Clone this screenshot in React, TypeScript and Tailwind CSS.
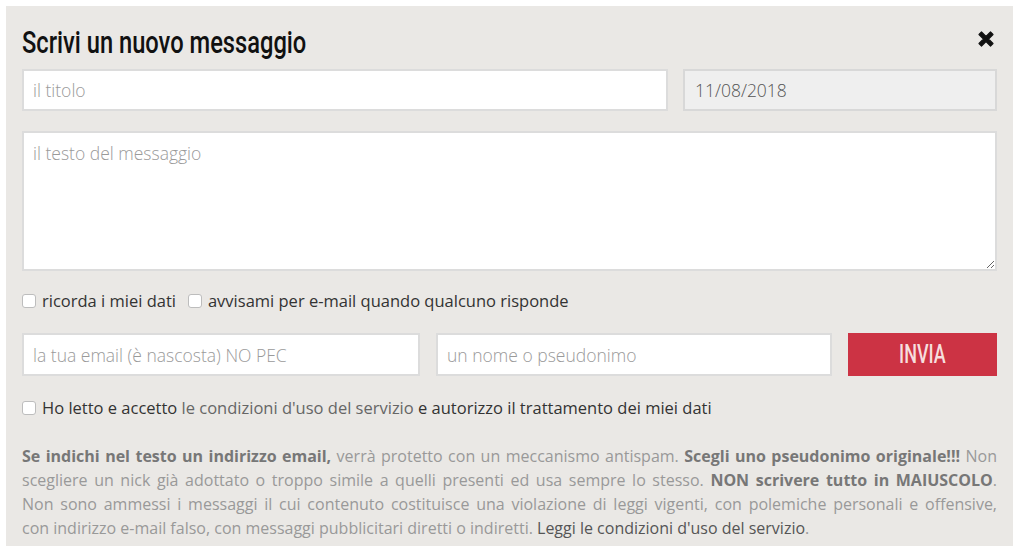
import React from 'react';

const body = { fontFamily: '"Open Sans", Lato, sans-serif' };
const condensed = { fontFamily: 'Roboto, "Liberation Sans", sans-serif' };

const Check: React.FC<{ label: React.ReactNode }> = ({ label }) => (
  <label className="flex items-center gap-[6px] cursor-pointer">
    <span className="w-[14px] h-[14px] rounded-[3px] border border-[#bdbdbd] bg-white shrink-0" />
    <span>{label}</span>
  </label>
);

const App: React.FC = () => {
  return (
    <div className="w-[1024px] h-[552px] bg-white p-[6px] pr-[11px]" style={body}>
      <div className="bg-[#eae8e5] h-[540px] px-[16px] pt-[16px] text-[16.5px] text-[#333]">
        <div className="flex items-center justify-between h-[40px]">
          <h1
            className="inline-block origin-left scale-x-[0.74] whitespace-nowrap text-[32px] font-medium text-[#111] leading-[40px]"
            style={condensed}
          >
            Scrivi un nuovo messaggio
          </h1>
          <button className="w-[20px] h-[20px] mr-[1px] mt-[-6px]">
            <svg viewBox="0 0 20 20" className="w-[20px] h-[20px]">
              <path d="M3 5.5 5.5 3 10 7.5 14.5 3 17 5.5 12.5 10 17 14.5 14.5 17 10 12.5 5.5 17 3 14.5 7.5 10Z" fill="#111" stroke="#111" strokeWidth="1.2" strokeLinejoin="round" />
            </svg>
          </button>
        </div>

        <div className="flex gap-[15px] mt-[7px] text-[17.5px]">
          <input
            className="w-[646px] h-[42px] bg-white border-2 border-[#dcdcdc] px-[9px] outline-none font-light placeholder:text-[#9a9a9a]"
            placeholder="il titolo"
          />
          <input
            className="flex-1 h-[42px] bg-[#efefef] border-2 border-[#d8d8d8] px-[10px] outline-none font-light text-[#555]"
            defaultValue="11/08/2018"
            readOnly
          />
        </div>

        <textarea
          className="block w-full h-[140px] mt-[20px] bg-white border-2 border-[#dcdcdc] px-[9px] py-[7px] outline-none text-[17.5px] font-light placeholder:text-[#9a9a9a]"
          placeholder="il testo del messaggio"
        />

        <div className="flex items-center gap-[12px] mt-[21px] h-[18px]">
          <Check label="ricorda i miei dati" />
          <Check label="avvisami per e-mail quando qualcuno risponde" />
        </div>

        <div className="flex gap-[16px] mt-[23px] text-[17.5px]">
          <input
            className="w-[398px] h-[43px] bg-white border-2 border-[#dcdcdc] px-[9px] outline-none font-light placeholder:text-[#9a9a9a]"
            placeholder="la tua email (è nascosta) NO PEC"
          />
          <input
            className="w-[396px] h-[43px] bg-white border-2 border-[#dcdcdc] px-[9px] outline-none font-light placeholder:text-[#9a9a9a]"
            placeholder="un nome o pseudonimo"
          />
          <button className="flex-1 h-[43px] bg-[#cc3344] flex items-center justify-center">
            <span
              className="inline-block scale-x-[0.72] text-[25px] font-medium text-[#f6dede] leading-none"
              style={condensed}
            >
              INVIA
            </span>
          </button>
        </div>

        <div className="flex items-center mt-[23px] h-[18px]">
          <Check
            label={
              <>
                Ho letto e accetto <span className="text-[#666]">le condizioni d'uso del servizio</span> e autorizzo il
                trattamento dei miei dati
              </>
            }
          />
        </div>

        <div className="mt-[27px] text-[16px] leading-[24px] text-[#999] whitespace-nowrap">
          <p className="text-justify [text-align-last:justify]">
            <b className="text-[#777]">Se indichi nel testo un indirizzo email,</b> verrà protetto con un meccanismo
            antispam. <b className="text-[#777]">Scegli uno pseudonimo originale!!!</b> Non
          </p>
          <p className="text-justify [text-align-last:justify]">
            scegliere un nick già adottato o troppo simile a quelli presenti ed usa sempre lo stesso.{' '}
            <b className="text-[#777]">NON scrivere tutto in MAIUSCOLO</b>.
          </p>
          <p className="text-justify [text-align-last:justify]">
            Non sono ammessi i messaggi il cui contenuto costituisce una violazione di leggi vigenti, con polemiche
            personali e offensive,
          </p>
          <p>
            con indirizzo e-mail falso, con messaggi pubblicitari diretti o indiretti.{' '}
            <span className="text-[#555]">Leggi le condizioni d'uso del servizio</span>.
          </p>
        </div>
      </div>
    </div>
  );
};

export default App;
